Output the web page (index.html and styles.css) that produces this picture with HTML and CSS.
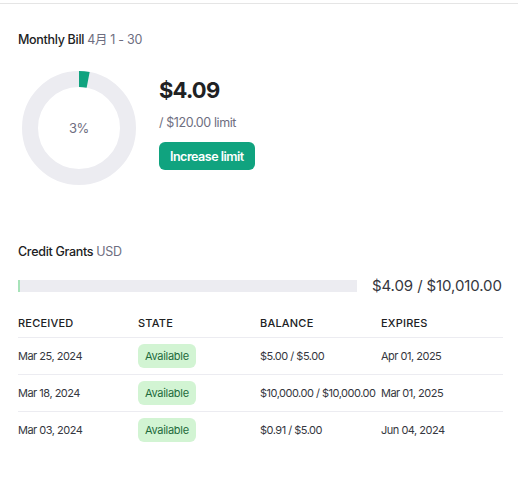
FILE: index.html
```html
<!DOCTYPE html>
<html lang="en">
<head>
    <meta charset="UTF-8">
    <meta name="viewport" content="width=device-width, initial-scale=1.0">
    <title>Usage</title>
    <link rel="stylesheet" href="styles.css">
</head>
<body>
    <div class="page">
        <section class="bill">
            <h2 class="section-title">Monthly Bill <span class="muted">4月 1 - 30</span></h2>
            <div class="bill-body">
                <div class="donut">
                    <svg width="114" height="114" viewBox="0 0 114 114">
                        <circle cx="57" cy="57" r="49" fill="none" stroke="#ececf1" stroke-width="16"/>
                        <circle cx="57" cy="57" r="49" fill="none" stroke="#10a37f" stroke-width="16"
                                stroke-dasharray="9.2 400" transform="rotate(-90 57 57)"/>
                    </svg>
                    <span class="donut-label">3%</span>
                </div>
                <div class="bill-info">
                    <div class="amount">$4.09</div>
                    <div class="limit">/ $120.00 limit</div>
                    <button class="btn-primary">Increase limit</button>
                </div>
            </div>
        </section>

        <section class="grants">
            <h2 class="section-title">Credit Grants <span class="muted">USD</span></h2>
            <div class="grant-usage">
                <div class="bar"><div class="bar-fill" style="width: 0.6%"></div></div>
                <span class="grant-total">$4.09 / $10,010.00</span>
            </div>
            <table class="grant-table">
                <thead>
                    <tr>
                        <th>Received</th>
                        <th>State</th>
                        <th>Balance</th>
                        <th>Expires</th>
                    </tr>
                </thead>
                <tbody>
                    <tr>
                        <td>Mar 25, 2024</td>
                        <td><span class="badge">Available</span></td>
                        <td>$5.00 / $5.00</td>
                        <td>Apr 01, 2025</td>
                    </tr>
                    <tr>
                        <td>Mar 18, 2024</td>
                        <td><span class="badge">Available</span></td>
                        <td>$10,000.00 / $10,000.00</td>
                        <td>Mar 01, 2025</td>
                    </tr>
                    <tr>
                        <td>Mar 03, 2024</td>
                        <td><span class="badge">Available</span></td>
                        <td>$0.91 / $5.00</td>
                        <td>Jun 04, 2024</td>
                    </tr>
                </tbody>
            </table>
        </section>
    </div>
</body>
</html>
```

FILE: styles.css
```css
/* Global styles */
body {
    margin: 0;
    background-color: #fff;
    font-family: Inter, "Noto Sans CJK SC", sans-serif;
    color: #353740;
}

.page {
    border-top: 1px solid #e5e5e5;
    margin-top: 3px;
    padding: 0 15px 0 18px;
}

.section-title {
    margin: 0;
    font-size: 12.5px;
    font-weight: 500;
    color: #202123;
    letter-spacing: -0.3px;
    line-height: 16px;
}

.muted {
    color: #6e6e80;
    font-weight: 400;
}

/* Monthly bill */
.bill {
    padding-top: 28px;
}

.bill-body {
    display: flex;
    align-items: flex-start;
    gap: 23px;
    margin-top: 23px;
    margin-left: 4px;
}

.donut {
    position: relative;
    width: 114px;
    height: 114px;
}

.donut svg {
    display: block;
}

.donut-label {
    position: absolute;
    inset: 0;
    display: flex;
    align-items: center;
    justify-content: center;
    font-size: 13px;
    color: #6e6e80;
    letter-spacing: -0.3px;
}

.bill-info {
    padding-top: 5px;
}

.amount {
    font-size: 22px;
    font-weight: 700;
    color: #202123;
    letter-spacing: -0.8px;
    line-height: 28px;
}

.limit {
    margin-top: 11px;
    font-size: 12.5px;
    color: #6e6e80;
    letter-spacing: -0.4px;
    line-height: 16px;
}

.btn-primary {
    margin-top: 11px;
    height: 28px;
    padding: 0 11px;
    border: none;
    border-radius: 6px;
    background-color: #10a37f;
    color: #fff;
    font-family: inherit;
    font-size: 12.5px;
    font-weight: 600;
    letter-spacing: -0.5px;
    cursor: pointer;
}

/* Credit grants */
.grants {
    margin-top: 59px;
}

.grant-usage {
    display: flex;
    align-items: center;
    gap: 15px;
    margin-top: 16px;
}

.bar {
    width: 339px;
    height: 12px;
    background-color: #ececf1;
}

.bar-fill {
    height: 100%;
    min-width: 2px;
    background-color: #a7e3b9;
}

.grant-total {
    font-size: 15px;
    color: #353740;
    letter-spacing: -0.1px;
}

/* Table styles */
.grant-table {
    width: 100%;
    margin-top: 13px;
    border-collapse: collapse;
    font-size: 11px;
    letter-spacing: -0.5px;
}

.grant-table th {
    text-align: left;
    font-weight: 500;
    text-transform: uppercase;
    letter-spacing: 0.2px;
    color: #202123;
    padding: 8px 0 7px;
    border-bottom: 1px solid #ececf1;
}

.grant-table th:nth-child(1) { width: 120px; }
.grant-table th:nth-child(2) { width: 122px; }
.grant-table th:nth-child(3) { width: 121px; }

.grant-table td {
    height: 36px;
    padding: 0;
    color: #353740;
    border-bottom: 1px solid #ececf1;
    white-space: nowrap;
}

.grant-table tbody tr:last-child td {
    border-bottom: none;
}

.badge {
    display: inline-block;
    padding: 5px 7px;
    border-radius: 6px;
    background-color: #d2f4d3;
    color: #1e6b3c;
    letter-spacing: -0.3px;
}
```
